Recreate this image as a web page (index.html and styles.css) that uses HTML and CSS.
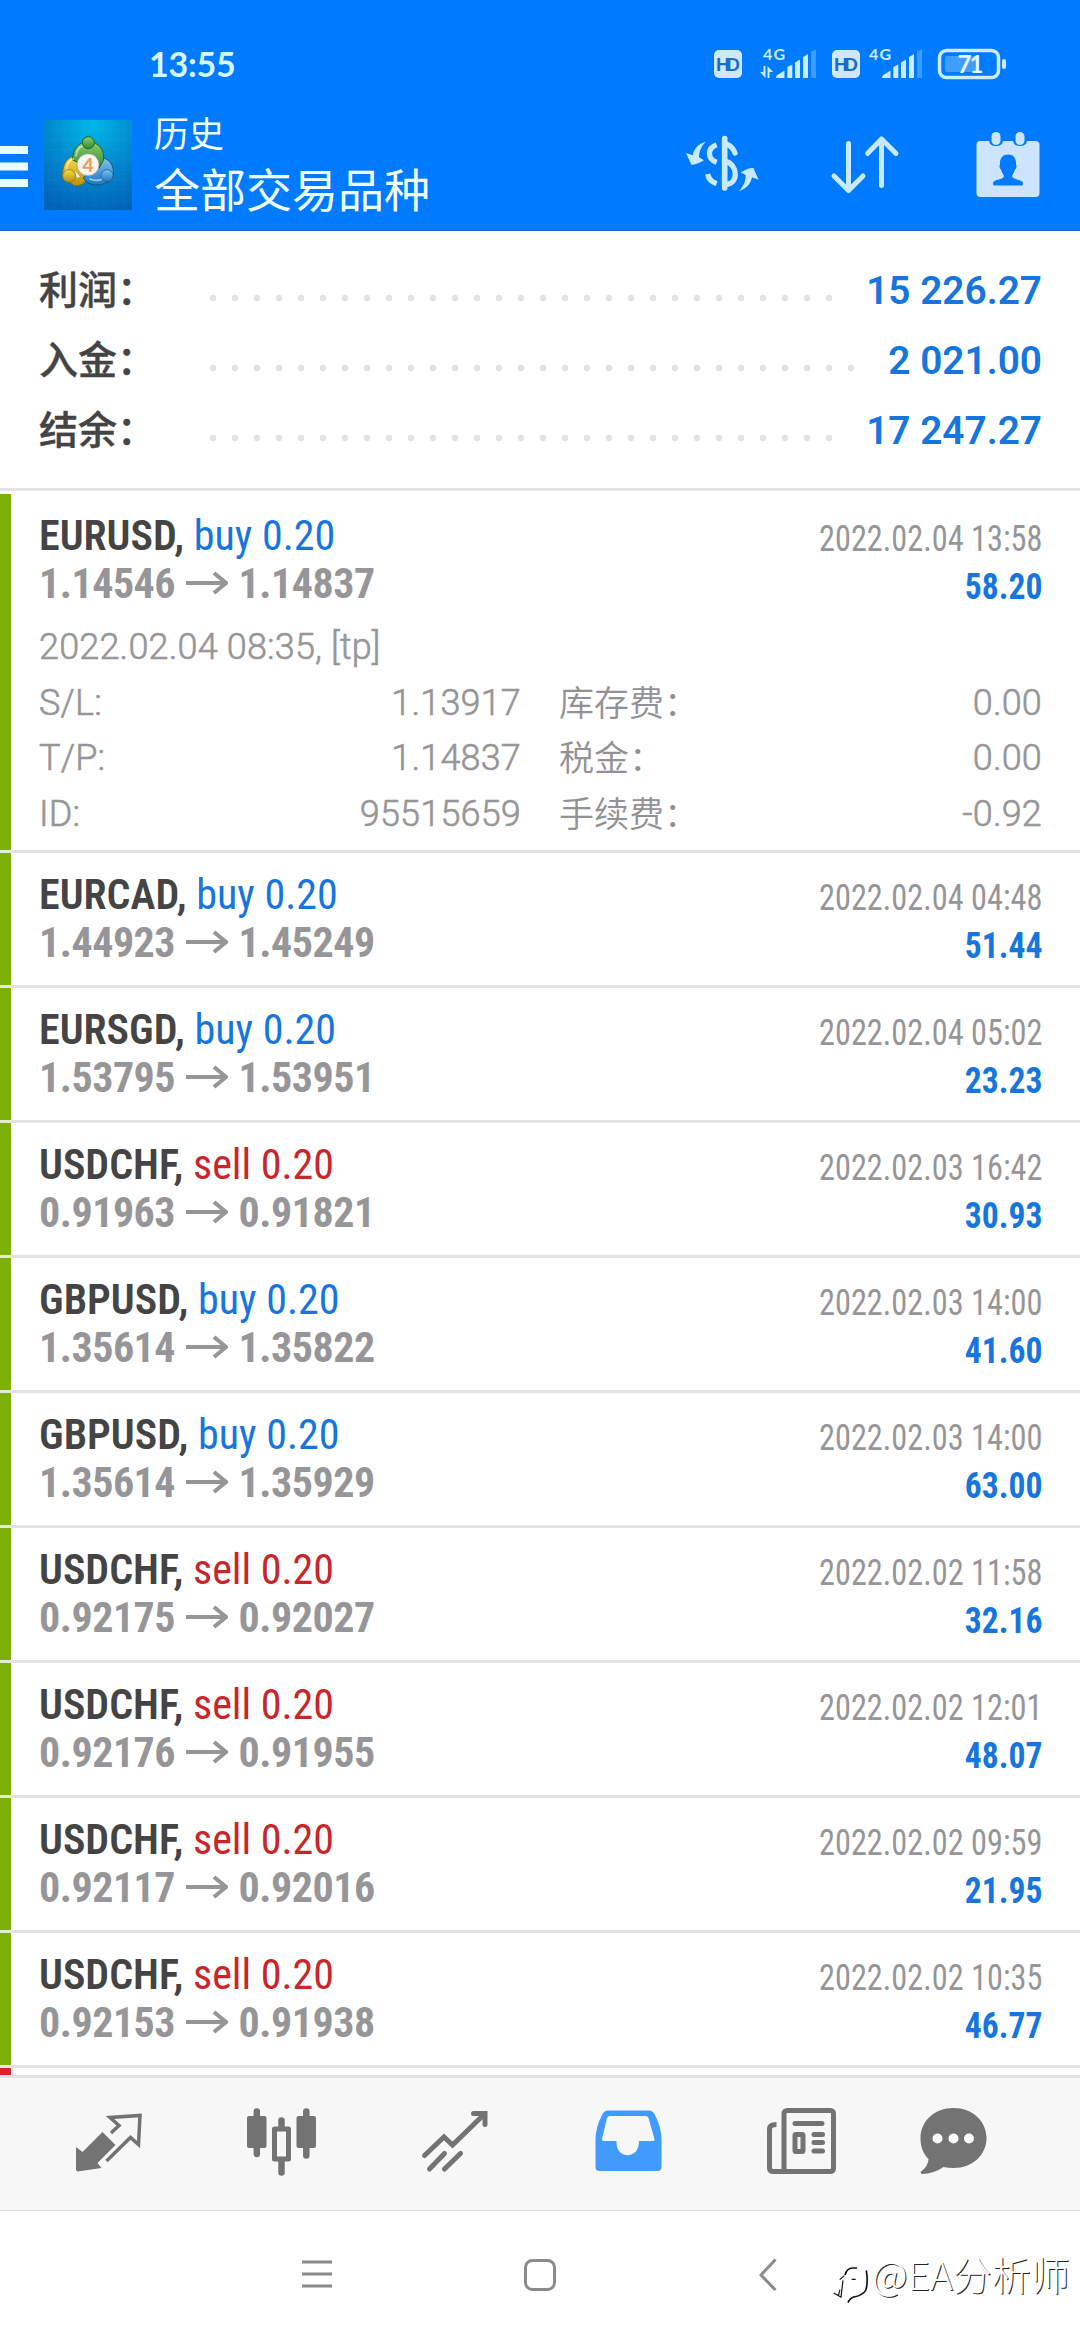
FILE: index.html
```
<!DOCTYPE html>
<html lang="zh-CN">
<head>
<meta charset="utf-8">
<title>历史</title>
<link rel="stylesheet" href="styles.css">
</head>
<body>
<header class="header">
  <div class="status">
    <span class="clock">13:55</span>
    <svg class="status-icons" width="296" height="40" viewBox="712 44 296 40">
      <defs>
        <g id="bars">
          <path d="M776 78q0-3 3-4l5.500-3.500v7.500zM787.300 78V67l5-2.500V78zM795 78V62.500l5-3V78zM803 78V57l5-3V78z"/>
          <path opacity=".3" d="M811 78V51.500l5-2V78z"/>
        </g>
      </defs>
      <g fill="#c9ecff">
        <rect x="714" y="50" width="28" height="28" rx="5" fill="#cfe8ff"/>
        <rect x="832" y="50" width="28" height="28" rx="5" fill="#cfe8ff"/>
        <text class="hd" x="728" y="71" textLength="24">HD</text>
        <text class="hd" x="846" y="71" textLength="24">HD</text>
        <text class="net" x="763" y="59.500" textLength="22">4G</text>
        <text class="net" x="869" y="59.500" textLength="22">4G</text>
        <path d="M763.500 66h2v12l-5.500-6h3.500zM767.500 66l5.500 6H769.500V78H767.500z"/>
        <use href="#bars"/>
        <use href="#bars" x="106"/>
        <rect x="939.500" y="50.500" width="59" height="27" rx="7" fill="none" stroke="#c9ecff" stroke-width="3.500"/>
        <rect x="945" y="56" width="33" height="16" rx="2" opacity=".32"/>
        <rect x="1002" y="59" width="4" height="10" rx="2"/>
        <text class="charge" x="969.500" y="73">71</text>
      </g>
    </svg>
  </div>
  <div class="toolbar">
    <svg class="menu" width="28" height="41" viewBox="0 0 28 41"><path fill="#e8ffff" d="M0 0h28v8H0zM0 16.500h28v8H0zM0 33h28v8H0z"/></svg>
    <svg class="logo" width="88" height="90" viewBox="132 30 264 270">
      <defs>
        <radialGradient id="sky" cx=".55" cy=".05" r="1"><stop offset="0" stop-color="#00b8e6"/><stop offset=".5" stop-color="#0089cf"/><stop offset="1" stop-color="#0062b8"/></radialGradient>
        <linearGradient id="leaf" x2="0" y2="1"><stop offset="0" stop-color="#8fcf6a"/><stop offset="1" stop-color="#2e8a34"/></linearGradient>
        <linearGradient id="gold" x2="0" y2="1"><stop offset="0" stop-color="#f6dc4a"/><stop offset="1" stop-color="#b8900f"/></linearGradient>
        <linearGradient id="sea" x2="0" y2="1"><stop offset="0" stop-color="#7cc4ee"/><stop offset="1" stop-color="#1f78c0"/></linearGradient>
      </defs>
      <rect x="132" y="30" width="264" height="270" fill="url(#sky)"/>
      <path d="M132 60h264M132 90h264M132 120h264M132 150h264M132 180h264M132 210h264M132 240h264M132 270h264M162 30v270M192 30v270M222 30v270M252 30v270M282 30v270M312 30v270M342 30v270M372 30v270" stroke="#fff" stroke-opacity=".07" stroke-width="2"/>
      <path d="M190 206C182 165 204 134 232 140L262 206Q246 232 222 226Z" fill="url(#gold)" stroke="#8a6d0c" stroke-width="3"/>
      <path d="M250 205L290 146C324 136 344 164 340 196C338 212 314 226 284 225Q262 222 250 205Z" fill="url(#sea)" stroke="#12558f" stroke-width="3"/>
      <path d="M218 150C216 118 236 96 264 94C296 96 316 120 310 152L296 176L266 130L236 158Z" fill="url(#leaf)" stroke="#1d6628" stroke-width="3"/>
      <path d="M228 140Q230 112 250 107M199 190Q198 152 222 146M268 206Q290 216 310 206" fill="none" stroke="#fff" stroke-opacity=".55" stroke-width="5"/>
      <circle cx="265" cy="98" r="18" fill="url(#leaf)" stroke="#1d6628" stroke-width="3"/>
      <circle cx="207" cy="198" r="19" fill="url(#gold)" stroke="#8a6d0c" stroke-width="2"/>
      <circle cx="321" cy="197" r="18" fill="url(#sea)" stroke="#12558f" stroke-width="2"/>
      <path d="M245 138L265 144L288 138L276 156H252ZM226 184L240 200L230 204Z" fill="#f4f7f4"/>
      <circle cx="264" cy="164" r="33" fill="#f7f5f4" stroke="#9a968e" stroke-width="2"/>
      <text x="264" y="185" text-anchor="middle" font-family="Lato,sans-serif" font-weight="700" font-size="58" fill="#f09a58">4</text>
    </svg>
    <div class="titles">
      <div class="title">历史</div>
      <div class="subtitle">全部交易品种</div>
    </div>
    <svg class="act-money" width="84" height="66" viewBox="0 300 252 198">
      <g fill="none" stroke="#c8eaff" stroke-width="16">
        <path d="M134 326V474" stroke-width="17" stroke-linecap="round"/>
        <path d="M138 342Q158 348 165 369" stroke-linecap="round"/>
        <path d="M138 394C174 404 176 462 138 463"/>
        <path d="M110 344C82 354 80 386 110 397"/>
        <path d="M83 432Q87 454 110 461"/>
      </g>
      <path fill="#c8eaff" d="M77 335C58 340 42 354 38 376L18 369L34 404Q46 406 72 391L57 382C57 362 66 346 77 335ZM177 483C196 478 212 464 216 442L236 449L220 414Q208 412 182 427L197 436C197 456 188 472 177 483Z"/>
    </svg>
    <svg class="act-sort" width="72" height="62" viewBox="829 134 72 62" fill="none" stroke="#c8eaff" stroke-width="5" stroke-linecap="round" stroke-linejoin="round"><path d="M848.500 143.500V190M834 176L848.500 190.500L863 176M881.500 185.500V139M867.500 153.500L881.500 139L896 153.500"/></svg>
    <svg class="act-cal" width="64" height="68" viewBox="976 131 64 68">
      <rect x="976.500" y="141" width="63" height="56" rx="4" fill="#cde4ff"/>
      <path fill="#007aff" d="M989 138h14v2q0 6-7 6t-7-6zM1013 138h14v2q0 6-7 6t-7-6z"/>
      <rect x="991.500" y="132" width="9" height="13" rx="4.500" fill="#cde4ff"/>
      <rect x="1015.500" y="132" width="9" height="13" rx="4.500" fill="#cde4ff"/>
      <path fill="#007aff" d="M1008 154.500c5.500 0 8.500 4 8 10 1 1 .5 4-1 5-1 4-3 5-3 7 2 4 11 2.500 11 7q0 2-1 2h-28q-1 0-1-2c0-4.500 9-3 11-7 0-2-2-3-3-7-1.500-1-2-4-1-5-.5-6 2.500-10 8-10z"/>
    </svg>
  </div>
</header>

<section class="summary">
  <div class="sum-row"><span class="sum-label">利润：</span><i class="dots"></i><b class="sum-value">15 226.27</b></div>
  <div class="sum-row"><span class="sum-label">入金：</span><i class="dots dots-long"></i><b class="sum-value">2 021.00</b></div>
  <div class="sum-row"><span class="sum-label">结余：</span><i class="dots"></i><b class="sum-value">17 247.27</b></div>
</section>

<main class="list">
  <article class="deal open">
    <div class="line"><span><b class="sym">EURUSD,</b> <span class="buy">buy 0.20</span></span><time>2022.02.04 13:58</time></div>
    <div class="line"><span class="price">1.14546<svg class="arrow" viewBox="0 0 42 24"><path d="M0 12H40M28 2L40 12L28 22"/></svg>1.14837</span><b class="profit">58.20</b></div>
    <div class="detail">
      <div class="note">2022.02.04 08:35, [tp]</div>
      <span>S/L:</span><span class="num">1.13917</span><span class="zh">库存费：</span><span class="num">0.00</span>
      <span>T/P:</span><span class="num">1.14837</span><span class="zh">税金：</span><span class="num">0.00</span>
      <span>ID:</span><span class="num">95515659</span><span class="zh">手续费：</span><span class="num">-0.92</span>
    </div>
  </article>
</main>

<nav class="tabs">
  <svg width="80" height="80" viewBox="68.500 2102 80 80">
    <path fill="#737373" d="M102 2132L115 2145L97 2163L101 2168L77 2171.500L75.500 2170V2147L82 2152Z"/>
    <path fill="none" stroke="#737373" stroke-width="3.500" d="M110.500 2133L118.500 2125.500L109.500 2117.500L139.500 2115.500L138 2144.500L130 2137.500L106 2161"/>
  </svg>
  <svg width="80" height="80" viewBox="241.500 2102 80 80">
    <g fill="#737373"><rect x="246.500" y="2116" width="19.500" height="32" rx="2"/><rect x="296" y="2116" width="19.500" height="32" rx="2"/></g>
    <rect x="274" y="2129" width="14" height="30" fill="none" stroke="#737373" stroke-width="5" stroke-linejoin="round"/>
    <path fill="none" stroke="#737373" stroke-width="6.500" stroke-linecap="round" d="M256.300 2111.500V2154M305.800 2111.500V2155.500M281 2120.500V2127M281 2162V2172.500"/>
  </svg>
  <svg width="80" height="80" viewBox="414.500 2102 80 80" fill="none" stroke="#737373" stroke-width="5" stroke-linecap="round">
    <path d="M424 2155.500L443.500 2137L452 2145L483 2115"/><path d="M473 2113.500H484.500V2124.500"/><path d="M429 2169L444 2153.500M444 2169L460 2153.500"/>
  </svg>
  <svg width="80" height="80" viewBox="587.500 2102 80 80">
    <path fill="#419bff" fill-rule="evenodd" d="M607 2110.500H649Q652 2110.500 654 2114Q661 2127 661 2140V2167Q661 2171 657 2171H599Q595 2171 595 2167V2140Q595 2127 602 2114Q604 2110.500 607 2110.500ZM610 2116Q607.500 2116 606.500 2118L601.500 2139Q601 2141 603 2141H616C615 2160 639 2160 638.500 2141H652Q654.500 2141 654 2139L648 2118Q647.500 2116 645 2116Z"/>
  </svg>
  <svg width="80" height="80" viewBox="760.500 2102 80 80" fill="none" stroke="#737373" stroke-width="5">
    <rect x="783.500" y="2110.500" width="49.500" height="61" rx="3"/><path d="M776 2124.500Q769 2124.500 769 2129V2168Q769 2171.500 773 2171.500H790"/>
    <path d="M794.500 2123.500H821.500M813.500 2134.500H822M813.500 2142.500H822M813.500 2151H822" stroke-linecap="round"/><rect x="794.500" y="2134.500" width="8" height="17" rx="1"/>
  </svg>
  <svg width="80" height="80" viewBox="913.500 2102 80 80">
    <path fill="#737373" d="M953 2108C972 2108 986 2121 986 2138C986 2155 972 2168 953 2168Q948 2168 943 2167Q934 2173.500 921 2174L920 2172Q928 2166 928 2159C922 2153 920 2146 920 2138C920 2121 934 2108 953 2108Z"/>
    <g fill="#fff"><circle cx="937" cy="2138.500" r="5"/><circle cx="953" cy="2138.500" r="5"/><circle cx="968.500" cy="2138.500" r="5"/></g>
  </svg>
</nav>
<footer class="sysbar">
  <svg class="sys-menu" width="30" height="30" viewBox="0 0 30 30"><path stroke="#8b8b8b" stroke-width="3" d="M0 3H30M0 15H30M0 27H30"/></svg>
  <svg class="sys-home" width="32" height="32" viewBox="0 0 32 32"><rect x="1.500" y="1.500" width="29" height="29" rx="7" fill="none" stroke="#8b8b8b" stroke-width="3"/></svg>
  <svg class="sys-back" width="18" height="34" viewBox="0 0 18 34"><path fill="none" stroke="#8b8b8b" stroke-width="3" d="M16.500 1.500L2 17L16.500 32"/></svg>
  <svg class="mark" width="38" height="44" viewBox="30 70 114 132" fill="none" stroke="#111">
    <path stroke-width="5" d="M72 106Q78 84 96 85H108M136 92Q142 130 134 152Q124 168 98 172Q86 176 81 189"/>
    <path stroke-width="3.500" d="M56 120L70 108M92 119H104M66 122L60 172L38 160M57 150L52 168"/>
  </svg>
  <span class="credit">@EA分析师</span>
</footer>
<script src="deals.js"></script>
</body>
</html>
```
FILE: styles.css
```
* { box-sizing: border-box; }
body {
  margin: 0; width: 1080px; height: 2340px; overflow: hidden;
  display: flex; flex-direction: column; background: #fff;
  font-family: Roboto, "Noto Sans CJK SC", sans-serif;
}
svg { display: block; flex: none; }

.header { height: 231px; flex: none; background: #007aff; border-bottom: 1px solid #1c6aba; color: #f2ffff; }
.status { height: 110px; padding: 44px 72px 0 149px; display: flex; justify-content: space-between; }
.clock { font: 700 34px/40px Lato, sans-serif; color: #d8f8ff; letter-spacing: -.2px; }
.hd { font: 700 19px "Liberation Sans", sans-serif; fill: #1a6fc4; text-anchor: middle; }
.net { font: 700 16px Lato, sans-serif; }
.charge { font: 700 24px Lato, sans-serif; text-anchor: middle; fill: #e4f8ff; letter-spacing: -2px; }
.toolbar { height: 120px; display: flex; align-items: flex-start; }
.menu { margin-top: 36px; }
.logo { margin: 10px 0 0 16px; }
.titles { margin: -2px auto 0 22px; font-family: "Noto Sans CJK SC", sans-serif; }
.title { font-size: 35px; line-height: 48px; }
.subtitle { font-size: 46px; line-height: 62px; }
.act-money { margin-top: 20px; }
.act-sort { margin: 24px 0 0 65px; }
.act-cal { margin: 21px 40px 0 75px; }

.summary { height: 260px; flex: none; padding: 23px 38px 0 39px; border-bottom: 3px solid #e4e4e4; }
.sum-row { height: 70px; display: flex; align-items: center; justify-content: space-between; }
.sum-label { width: 163px; margin-top: -4px; font: 500 39px/70px "Noto Sans CJK SC", sans-serif; color: #444; -webkit-text-stroke: .4px #444; }
.dots { width: 638px; height: 8px; margin: 18px auto 0 0; background: radial-gradient(circle, #e2e2e2 3px, transparent 3.700px) 0 0 / 22px 8px; }
.dots-long { width: 660px; }
.sum-value { margin-top: 3px; font-size: 38.800px; font-weight: 600; color: #1676de; }

.list { height: 1584px; flex: none; padding-top: 3px; overflow: hidden; }
.deal { height: 135px; padding: 18px 38px 0 28px; border-left: 11px solid #7fb006; position: relative; border-bottom: 3px solid #e4e4e4; }
.deal::before { content: ""; position: absolute; left: -11px; bottom: -3px; width: 11px; height: 3px; background: #e3ecd0; }
.deal.loss { border-left-color: #d8242c; }
.deal.open { height: 359px; }
.line { height: 48px; line-height: 48px; display: flex; justify-content: space-between; align-items: baseline; font-family: "Roboto Condensed", Roboto, sans-serif; font-size: 42px; }
.sym { color: #444; font-weight: 600; }
.buy { color: #1676de; }
.sell { color: #c9252b; }
.price { font-weight: 700; color: #969698; display: flex; align-items: center; letter-spacing: -.5px; }
.arrow { width: 42px; height: 24px; margin: -3px 11px 0 10.500px; fill: none; stroke: #969698; stroke-width: 4; }
.deal time, .profit { font-size: 36.500px; transform: scaleX(.885); transform-origin: right; position: relative; top: 1px; }
.deal time { color: #969698; }
.deal .profit { color: #1676de; transform: scaleX(.92); }
.detail { margin-top: 12px; display: grid; grid-template-columns: 110px 372px 200px 1fr; grid-auto-rows: 55.600px; line-height: 55.600px; font-size: 36px; font-weight: 300; letter-spacing: .18px; color: #969699; -webkit-text-stroke: .6px #969699; }
.note { grid-column: 1 / -1; }
.num { text-align: right; }
.zh { margin-top: -3px; padding-left: 38px; font-family: "Noto Sans CJK SC", sans-serif; font-size: 35px; font-weight: 350; letter-spacing: 0; white-space: nowrap; color: #929295; -webkit-text-stroke: 0; }

.tabs { height: 136px; flex: none; padding: 24px 0 0 68.500px; display: flex; gap: 93px; background: #f7f7f7; border-top: 3px solid #e2e2e2; border-bottom: 1px solid #dedede; }
.tabs svg:last-child { margin-left: -20px; }
.sysbar { flex: 1; display: flex; align-items: flex-start; padding-top: 48px; }
.sys-menu { margin-left: 302px; }
.sys-home { margin-left: 192px; }
.sys-back { margin: -1px 0 0 203px; }
.mark { margin: 4px 0 0 54px; }
.credit { margin: -12px 0 0 3px; font: 300 39px/52px "Noto Sans CJK SC", sans-serif; color: #fff; text-shadow: 1px 1px 0 #222; white-space: nowrap; }
```
FILE: deals.js
```
const deals = [
  ["EURCAD", "buy", "1.44923", "1.45249", "2022.02.04 04:48", "51.44"],
  ["EURSGD", "buy", "1.53795", "1.53951", "2022.02.04 05:02", "23.23"],
  ["USDCHF", "sell", "0.91963", "0.91821", "2022.02.03 16:42", "30.93"],
  ["GBPUSD", "buy", "1.35614", "1.35822", "2022.02.03 14:00", "41.60"],
  ["GBPUSD", "buy", "1.35614", "1.35929", "2022.02.03 14:00", "63.00"],
  ["USDCHF", "sell", "0.92175", "0.92027", "2022.02.02 11:58", "32.16"],
  ["USDCHF", "sell", "0.92176", "0.91955", "2022.02.02 12:01", "48.07"],
  ["USDCHF", "sell", "0.92117", "0.92016", "2022.02.02 09:59", "21.95"],
  ["USDCHF", "sell", "0.92153", "0.91938", "2022.02.02 10:35", "46.77"]
];
const arrow = '<svg class="arrow" viewBox="0 0 42 24"><path d="M0 12H40M28 2L40 12L28 22"/></svg>';
document.querySelector(".list").insertAdjacentHTML("beforeend", deals.map(([sym, side, from, to, time, profit]) =>
  `<article class="deal">
    <div class="line"><span><b class="sym">${sym},</b> <span class="${side}">${side} 0.20</span></span><time>${time}</time></div>
    <div class="line"><span class="price">${from}${arrow}${to}</span><b class="profit">${profit}</b></div>
  </article>`).join("") + '<article class="deal loss"></article>');
```
